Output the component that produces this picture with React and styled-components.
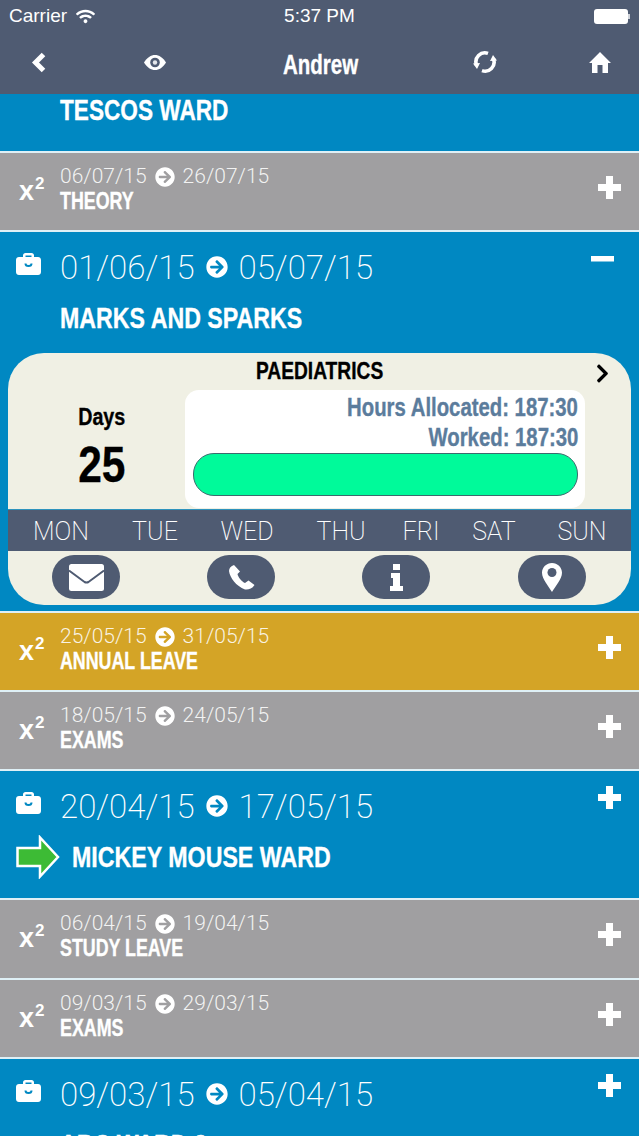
import styled, { createGlobalStyle } from "styled-components";
import { FaArrowCircleRight, FaChevronRight, FaWifi } from "react-icons/fa";

const sans = `"Liberation Sans", Arial, sans-serif`;
const light = `Roboto, "Liberation Sans", Arial, sans-serif`;

const slate = "#4f5b72";
const colors = { blue: "#0088c2", grey: "#a09fa1", gold: "#d4a426" };

const GlobalStyle = createGlobalStyle`
  html, body {
    margin: 0;
    padding: 0;
    background: #dff0f6;
  }
`;

// no condensed family is installed, so the bold labels get squeezed
const Narrow = styled.span`
  display: inline-block;
  vertical-align: top;
  white-space: nowrap;
  font-family: ${sans};
  font-weight: 700;
  -webkit-text-stroke: 0.35px currentColor;
  transform: scaleX(${(p) => p.$x || 0.79});
  transform-origin: ${(p) => p.$origin || "left"} center;
`;

const Page = styled.div`
  width: 639px;
  height: 1136px;
  overflow: hidden;
  display: flex;
  flex-direction: column;
  color: #fff;
  font-family: ${light};
`;

const Header = styled.header`
  flex: none;
  height: 94px;
  background: ${slate};
  display: flex;
  flex-direction: column;
`;

const StatusBar = styled.div`
  height: 32px;
  padding: 0 9px;
  display: grid;
  grid-template-columns: 1fr auto 1fr;
  align-items: center;
  font-size: 19px;
  font-family: ${sans};
`;

const Carrier = styled.div`
  display: flex;
  align-items: center;
  gap: 9px;
`;

const Battery = styled.div`
  justify-self: end;
  width: 34px;
  height: 15px;
  border-radius: 3px;
  background: #fff;
  margin-right: 2px;
  position: relative;
  &::after {
    content: "";
    position: absolute;
    right: -2px;
    top: 5px;
    width: 2px;
    height: 5px;
    background: #cfd3da;
  }
`;

const NavBar = styled.nav`
  height: 62px;
  display: grid;
  grid-template-columns: 77px 156px 176px 152px 78px;
  align-items: center;
  justify-items: center;
  padding-bottom: 2px;
  box-sizing: border-box;
`;

const NavTitle = styled.div`
  font-size: 27px;
  line-height: 32px;
  margin-top: 6px;
`;

const Row = styled.section`
  flex: none;
  box-sizing: border-box;
  height: ${(p) => p.$height}px;
  background: ${(p) => colors[p.$tone]};
  margin-bottom: 2px;
  position: relative;
`;

const TopTitle = styled.div`
  font-size: 29px;
  padding-left: 60px;
  line-height: 32px;
`;

const SmallRow = styled(Row)`
  display: flex;
  align-items: flex-start;
  padding-top: 11px;
`;

const Square = styled.div`
  width: 60px;
  flex: none;
  padding: 13px 0 0 19px;
  box-sizing: border-box;
  font-family: ${sans};
  font-weight: 700;
  font-size: 27px;
  line-height: 28px;
  sup {
    font-size: 17px;
    line-height: 0;
    vertical-align: 11px;
    margin-left: 1px;
  }
`;

const SmallDates = styled.div`
  display: flex;
  align-items: center;
  gap: 8px;
  font-size: 21px;
  font-weight: 300;
  line-height: 25px;
  color: rgba(255, 255, 255, 0.88);
  svg {
    color: #fff;
  }
`;

const SmallTitle = styled.div`
  font-size: 23px;
  line-height: 26px;
  margin-top: -1px;
`;

const Toggle = styled.svg`
  position: absolute;
  right: ${(p) => p.$right || 18}px;
  top: ${(p) => p.$top}px;
  width: 23px;
  height: 23px;
  fill: #fff;
`;

const WardHead = styled.div`
  display: flex;
  align-items: center;
  height: 30px;
  padding-top: 20px;
`;

const WardIcon = styled.svg`
  width: 25px;
  height: 22px;
  margin: -6px 19px 0 16px;
  flex: none;
`;

const WardDates = styled.div`
  display: flex;
  align-items: center;
  gap: 11px;
  font-size: 33px;
  font-weight: 200;
`;

const WardTitle = styled.div`
  display: flex;
  align-items: center;
  gap: 12px;
  margin-top: 19px;
  padding-left: ${(p) => (p.$flagged ? 16 : 60)}px;
  height: 34px;
  font-size: 29px;
`;

const Card = styled.div`
  margin: 18px 8px 0;
  height: 252px;
  background: #f0f0e4;
  border-radius: 36px;
  overflow: hidden;
  display: flex;
  flex-direction: column;
  color: #000;
`;

const CardTitle = styled.div`
  flex: none;
  height: 37px;
  position: relative;
  text-align: center;
  font-size: 24px;
  line-height: 36px;
`;

const CardArrow = styled.span`
  position: absolute;
  right: 18px;
  top: 10px;
  display: flex;
`;

const CardBody = styled.div`
  flex: none;
  height: 119px;
  display: flex;
`;

const DaysBox = styled.div`
  width: 177px;
  flex: none;
  padding-left: 11px;
  box-sizing: border-box;
  text-align: center;
`;

const DaysLabel = styled.div`
  font-size: 24px;
  line-height: 28px;
  margin-top: 13px;
`;

const DaysValue = styled.div`
  font-size: 50px;
  line-height: 56px;
  margin-top: 6px;
`;

const HoursPanel = styled.div`
  width: 400px;
  height: 118px;
  background: #fff;
  border-radius: 14px;
  padding: 2px 7px 0 8px;
  box-sizing: border-box;
  text-align: right;
  color: #5b7c9c;
  font-size: 25px;
  line-height: 30px;
`;

const Progress = styled.div`
  height: 43px;
  box-sizing: border-box;
  margin-top: 1px;
  background: #00fa9a;
  border: 1px solid #3d6a6e;
  border-radius: 21px;
`;

const Week = styled.div`
  flex: none;
  height: 42px;
  padding-top: 2px;
  background: ${slate};
  border-top: 1px solid #2e93bd;
  box-sizing: border-box;
  color: #fff;
  display: grid;
  grid-template-columns: 106px 82px 102px 86px 74px 72px 104px;
  align-items: center;
  justify-items: center;
  font-size: 25px;
  font-weight: 200;
`;

const Actions = styled.div`
  flex: none;
  height: 54px;
  display: flex;
  gap: 87px;
  padding: 4px 0 0 44px;
  box-sizing: border-box;
`;

const ActionButton = styled.div`
  width: 68px;
  height: 44px;
  margin-right: ${(p) => p.$nudge || 0}px;
  border-radius: 22px;
  background: ${slate};
  display: flex;
  align-items: center;
  justify-content: center;
`;

const BackIcon = () => (
  <svg width="15" height="21" viewBox="0 0 15 21">
    <path d="M12.500 2.500L4.500 10.500l8 8" fill="none" stroke="#fff" strokeWidth="5" />
  </svg>
);

const EyeIcon = () => (
  <svg width="22" height="15" viewBox="0 0 22 15">
    <path d="M0 7.500C3 2.500 7 0 11 0s8 2.500 11 7.500C19 12.500 15 15 11 15S3 12.500 0 7.500z" fill="#fff" />
    <circle cx="11" cy="7.500" r="4.800" fill={slate} />
    <circle cx="11" cy="7.500" r="2.200" fill="#e4e6ea" />
  </svg>
);

const SyncIcon = () => (
  <svg width="24" height="24" viewBox="0 0 24 24">
    <path d="M3.500 15A9 9 0 0 1 15 3.400" fill="none" stroke="#fff" strokeWidth="3.600" />
    <path d="M20.500 9A9 9 0 0 1 9 20.600" fill="none" stroke="#fff" strokeWidth="3.600" />
    <path d="M0 13.500L7 13l-3 6zM24 10.500L17 11l3-6z" fill="#fff" />
  </svg>
);

const HomeIcon = () => (
  <svg width="22" height="21" viewBox="0 0 22 21">
    <path d="M11 0l11 11h-3v10h-5.500v-8h-5v8H3V11H0z" fill="#fff" />
  </svg>
);

const PhoneIcon = () => (
  <svg width="27" height="25" viewBox="0 0 27 25">
    <path
      d="M6 0C3 1 1 3 1 6c1 7 7 15 16 18.500 3 .5 7-.5 9.500-4.500l-6-4.500L17 18c-3-1-7-6-7.500-9L12 6.500z"
      fill="#fff"
    />
  </svg>
);

const InfoIcon = () => (
  <svg width="13" height="27" viewBox="0 0 13 27">
    <path d="M3 0h7v6H3zM1 9h9v13h3v5H0v-5h3v-8H1z" fill="#fff" />
  </svg>
);

const PinIcon = () => (
  <svg width="20" height="29" viewBox="0 0 20 29">
    <path d="M10 0C4.500 0 0 4.300 0 9.800 0 16 7 24 10 29c3-5 10-13 10-19.200C20 4.300 15.500 0 10 0z" fill="#fff" />
    <circle cx="10" cy="9.500" r="4.500" fill={slate} />
  </svg>
);

const MailIcon = () => (
  <svg width="35" height="27" viewBox="0 0 35 27">
    <rect width="35" height="27" rx="2.500" fill="#fff" />
    <path d="M0 6.500l15.500 11.500q2 1 4 0L35 6.500" fill="none" stroke={slate} strokeWidth="2" />
  </svg>
);

const Plus = ({ top }) => (
  <Toggle $top={top} viewBox="0 0 23 23">
    <path d="M8 0h7v8h8v7h-8v8H8v-8H0V8h8z" />
  </Toggle>
);

const Minus = ({ top }) => (
  <Toggle $top={top} $right={25} viewBox="0 0 23 23">
    <rect y="9" width="23" height="5.500" />
  </Toggle>
);

const Briefcase = () => (
  <WardIcon viewBox="0 0 25 22">
    <path
      d="M7 4V2.500C7 1 8 0 9.500 0h6C17 0 18 1 18 2.500V4h4c1.700 0 3 1.300 3 3v12c0 1.700-1.300 3-3 3H3c-1.700 0-3-1.300-3-3V7c0-1.700 1.300-3 3-3zM9.500 4h6V2.500h-6z"
      fill="#fff"
      fillRule="evenodd"
    />
    <path d="M9.500 10.500c0 2 1 2.500 3 2.500s3-.5 3-2.500" fill="none" stroke="#0088c2" strokeWidth="2" />
  </WardIcon>
);

const StepArrow = () => (
  <svg width="44" height="44" viewBox="0 0 44 44">
    <path d="M1.500 13H24V2.500L42 22 24 41.500V31H1.500z" fill="#3dbb35" stroke="#fff" strokeWidth="2.500" />
  </svg>
);

const Shift = ({ tone, from, to, title, height = 77 }) => (
  <SmallRow $tone={tone} $height={height}>
    <Square>
      x<sup>2</sup>
    </Square>
    <div>
      <SmallDates>
        {from} <FaArrowCircleRight size={20} /> {to}
      </SmallDates>
      <SmallTitle>
        <Narrow $x={0.775}>{title}</Narrow>
      </SmallTitle>
    </div>
    <Plus top={23} />
  </SmallRow>
);

const WardHeader = ({ from, to }) => (
  <WardHead>
    <Briefcase />
    <WardDates>
      {from} <FaArrowCircleRight size={22} /> {to}
    </WardDates>
  </WardHead>
);

const days = ["MON", "TUE", "WED", "THU", "FRI", "SAT", "SUN"];

const App = () => {
  return (
    <Page>
      <GlobalStyle />
      <Header>
        <StatusBar>
          <Carrier>
            Carrier <FaWifi size={19} />
          </Carrier>
          <div>5:37 PM</div>
          <Battery />
        </StatusBar>
        <NavBar>
          <BackIcon />
          <EyeIcon />
          <NavTitle>
            <Narrow $x={0.76} $origin="center">
              Andrew
            </Narrow>
          </NavTitle>
          <SyncIcon />
          <HomeIcon />
        </NavBar>
      </Header>

      <Row $tone="blue" $height={57}>
        <TopTitle>
          <Narrow $x={0.78}>TESCOS WARD</Narrow>
        </TopTitle>
      </Row>
      <Shift tone="grey" from="06/07/15" to="26/07/15" title="THEORY" />

      <Row $tone="blue" $height={379}>
        <WardHeader from="01/06/15" to="05/07/15" />
        <WardTitle>
          <Narrow $x={0.8}>MARKS AND SPARKS</Narrow>
        </WardTitle>
        <Minus top={15} />
        <Card>
          <CardTitle>
            <Narrow $x={0.8} $origin="center">
              PAEDIATRICS
            </Narrow>
            <CardArrow>
              <FaChevronRight size={21} />
            </CardArrow>
          </CardTitle>
          <CardBody>
            <DaysBox>
              <DaysLabel>
                <Narrow $x={0.82} $origin="center">
                  Days
                </Narrow>
              </DaysLabel>
              <DaysValue>
                <Narrow $x={0.85} $origin="center">
                  25
                </Narrow>
              </DaysValue>
            </DaysBox>
            <HoursPanel>
              <div>
                <Narrow $x={0.813} $origin="right">
                  Hours Allocated: 187:30
                </Narrow>
              </div>
              <div>
                <Narrow $x={0.813} $origin="right">
                  Worked: 187:30
                </Narrow>
              </div>
              <Progress />
            </HoursPanel>
          </CardBody>
          <Week>
            {days.map((day) => (
              <span key={day}>{day}</span>
            ))}
          </Week>
          <Actions>
            <ActionButton>
              <MailIcon />
            </ActionButton>
            <ActionButton>
              <PhoneIcon />
            </ActionButton>
            <ActionButton $nudge={1}>
              <InfoIcon />
            </ActionButton>
            <ActionButton>
              <PinIcon />
            </ActionButton>
          </Actions>
        </Card>
      </Row>

      <Shift tone="gold" from="25/05/15" to="31/05/15" title="ANNUAL LEAVE" />
      <Shift tone="grey" from="18/05/15" to="24/05/15" title="EXAMS" />

      <Row $tone="blue" $height={127}>
        <WardHeader from="20/04/15" to="17/05/15" />
        <WardTitle $flagged>
          <StepArrow />
          <Narrow $x={0.8}>MICKEY MOUSE WARD</Narrow>
        </WardTitle>
        <Plus top={15} />
      </Row>

      <Shift tone="grey" from="06/04/15" to="19/04/15" title="STUDY LEAVE" height={78} />
      <Shift tone="grey" from="09/03/15" to="29/03/15" title="EXAMS" />

      <Row $tone="blue" $height={127}>
        <WardHeader from="09/03/15" to="05/04/15" />
        <WardTitle>
          <Narrow $x={0.8}>ABC WARD 2</Narrow>
        </WardTitle>
        <Plus top={15} />
      </Row>
    </Page>
  );
};

export default App;
